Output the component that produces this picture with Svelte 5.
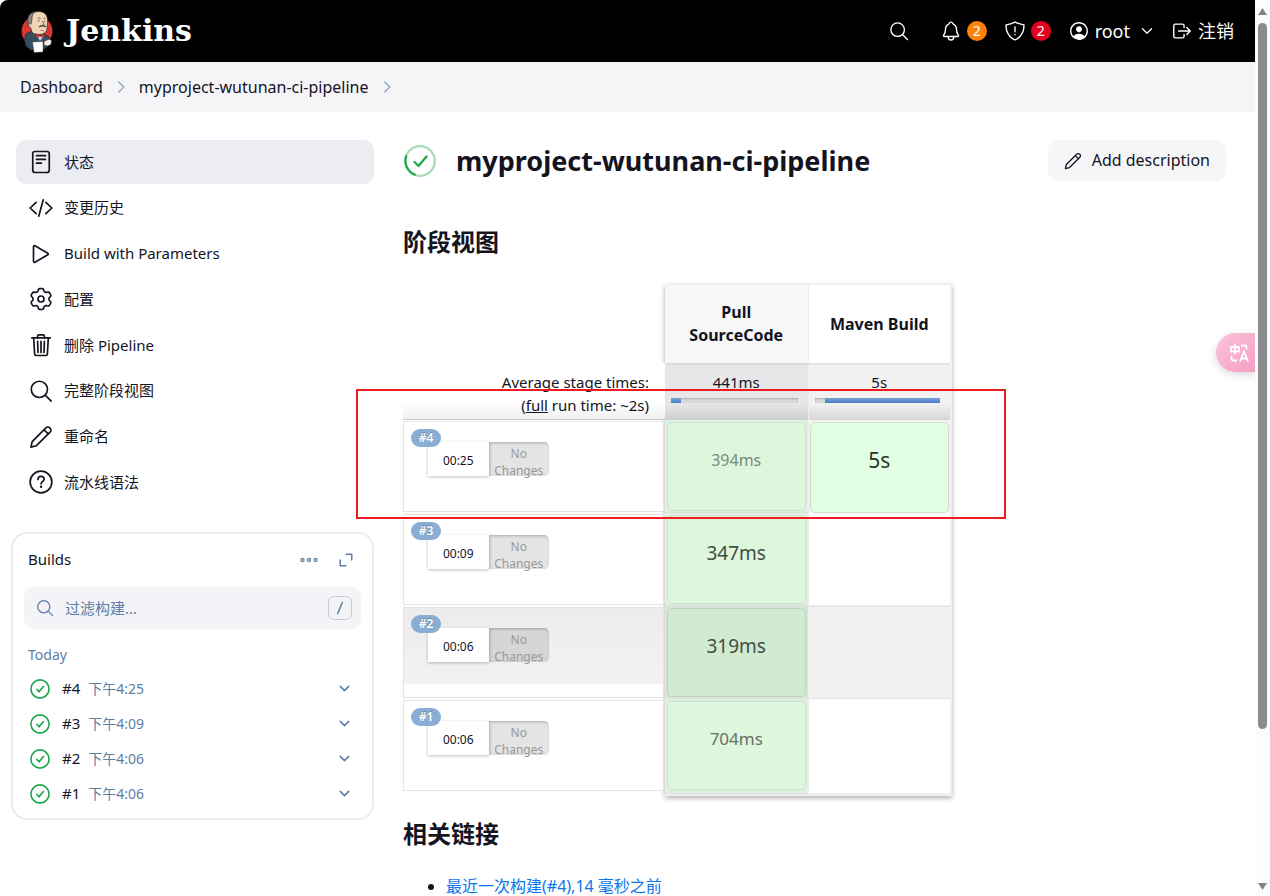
<script>
  const tasks = [
    { icon: 'doc', label: '状态', active: true },
    { icon: 'code', label: '变更历史' },
    { icon: 'play', label: 'Build with Parameters' },
    { icon: 'gear', label: '配置' },
    { icon: 'trash', label: '删除 Pipeline' },
    { icon: 'search', label: '完整阶段视图' },
    { icon: 'pencil', label: '重命名' },
    { icon: 'help', label: '流水线语法' }
  ];

  const builds = [
    { id: '#4', time: '下午4:25' },
    { id: '#3', time: '下午4:09' },
    { id: '#2', time: '下午4:06' },
    { id: '#1', time: '下午4:06' }
  ];

  const runs = [
    { id: '#4', time: '00:25', pull: '394ms', tone: 'faint', maven: '5s' },
    { id: '#3', time: '00:09', pull: '347ms', tone: 'strong' },
    { id: '#2', time: '00:06', pull: '319ms', tone: 'strong', hover: true },
    { id: '#1', time: '00:06', pull: '704ms', tone: 'medium' }
  ];

  // Six soft teeth around a circle, in a 512-unit box.
  const gear =
    'M' +
    Array.from({ length: 144 }, (_, i) => {
      const t = (i / 144) * Math.PI * 2;
      const r = 197 + 27 * Math.tanh(2.2 * Math.cos(6 * t) + 0.5);
      return `${(256 + r * Math.sin(t)).toFixed(1)} ${(256 - r * Math.cos(t)).toFixed(1)}`;
    }).join('L') +
    'Z';

  const shapes = {
    doc: ['M128 32h256a48 48 0 0148 48v352a48 48 0 01-48 48H128a48 48 0 01-48-48V80a48 48 0 0148-48z', 'M160 120h192M160 200h192M160 280h104'],
    code: ['M152 376L24 256l128-120M360 376l128-120-128-120M304 80l-96 352'],
    play: ['M96 101v310c0 17 17 28 31 20l275-158c12-7 12-27 0-34L127 81c-14-8-31 3-31 20z'],
    gear: [gear, 'M256 192a64 64 0 100 128 64 64 0 000-128z'],
    trash: ['M100 112l20 336c1 18 14 32 32 32h208c18 0 31-14 32-32l20-336', 'M60 104h392', 'M184 104V64a26 26 0 0126-26h92a26 26 0 0126 26v40M256 176v240M184 176l8 240M328 176l-8 240'],
    search: ['M221 48a173 173 0 10173 173A173 173 0 00221 48z', 'M346 346L472 472'],
    pencil: ['M40 472l28-116L360 62a54 54 0 0178-4l14 14a54 54 0 01-2 78L158 442z', 'M322 102l88 88'],
    help: ['M256 24a232 232 0 100 464 232 232 0 000-464z', 'M192 200c0-40 30-64 66-64s66 24 66 60c0 46-66 50-66 98'],
    bell: ['M427.68 351.43C402 320 383.87 304 383.87 217.35 383.87 138 343.35 109.73 310 96c-4.43-1.82-8.6-6-9.95-10.55C294.2 65.54 277.8 48 256 48s-38.21 17.55-44 37.47c-1.35 4.6-5.52 8.71-9.95 10.53-33.39 13.75-73.87 41.92-73.87 121.35C128.13 304 110 320 84.32 351.43 73.68 364.45 83 384 101.61 384h308.88c18.51 0 27.77-19.61 17.19-32.57z', 'M320 384v16a64 64 0 01-128 0v-16'],
    shield: ['M463.1 112.37C373.68 96.33 336.71 84.45 256 48c-80.71 36.45-117.68 48.33-207.1 64.37C32.7 369.13 240.58 457.79 256 464c15.42-6.21 223.3-94.87 207.1-351.63z', 'M256 160v116M256 336v8'],
    logout: ['M304 336v40a40 40 0 01-40 40H104a40 40 0 01-40-40V136a40 40 0 0140-40h152c22.09 0 48 17.91 48 40v40M368 336l80-80-80-80M176 256h256'],
    down: ['M112 184l144 144 144-144'],
    right: ['M184 96l160 160-160 160'],
    expand: ['M256 72h184v184', 'M72 256v184h184'],
    check: ['M256 24a232 232 0 100 464 232 232 0 000-464z', 'M176 268l56 60 112-136']
  };
</script>

{#snippet icon(name, size, weight = 36)}
  <svg class="icon" width={size} height={size} viewBox="0 0 512 512" fill="none" stroke="currentColor" stroke-width={weight} stroke-linecap="round" stroke-linejoin="round" aria-hidden="true">
    {#each shapes[name] as d}<path {d} />{/each}
    {#if name === 'help'}<circle cx="257" cy="358" r="26" fill="currentColor" stroke="none" />{/if}
  </svg>
{/snippet}

<div class="window">
  <div class="page">
    <header>
      <a class="brand" href="#home">
        <svg width="34" height="46" viewBox="0 0 34 46" aria-hidden="true">
          <ellipse cx="17" cy="23" rx="15.500" ry="15" fill="#d33833" />
          <path d="M6 26l6-3 4 4 8-1 5 3 1 6-2 3-5 4H11l-5-4-1.500-6z" fill="#335061" stroke="#1c2c36" stroke-width=".8" />
          <path d="M12 24l-1.500-5C8 13 9 4 18 3.500c7 0 10 4 9.500 10.500L27 21c-1 4-4 5.500-8 5.500-4 0-6-1-7-2.500z" fill="#f0d6b7" stroke="#2b2320" stroke-width=".6" />
          <path d="M9.500 19C5.500 12 8 4.500 15.500 3.500c-3 2-3.500 4.500-3.500 7.500l-.5 4z" fill="#8a8688" stroke="#2b2320" stroke-width=".6" />
          <path d="M10.500 15.500c-2.500-.5-2.500 3.500.5 4.500" fill="#f0d6b7" stroke="#2b2320" stroke-width=".5" />
          <path d="M17.500 10.500q1.500-1.500 3 0M23.500 10.500q1-1 2 0M17.500 13h2.500M23.500 13h2M22.500 13l1.500 3.500-1.500.5" fill="none" stroke="#4a3b33" stroke-width=".7" />
          <path d="M19 19q3.500-2.500 7 0" fill="none" stroke="#4f4541" stroke-width="1.300" />
          <path d="M20.500 22.200q2 .8 3.500 0" fill="none" stroke="#7c4a3a" stroke-width=".7" />
          <path d="M17 28l3 5 4-5z" fill="#b9cfdd" />
          <path d="M15.500 25.500l4.500 2 4.500-2v4.500l-4.500-2-4.500 2z" fill="#d33833" stroke="#7a1514" stroke-width=".4" />
          <path d="M12.500 34l10.500-.5v10.500l-9 .5z" fill="#fff" stroke="#35302f" stroke-width=".4" />
          <path d="M24 33.500l5-2.500 2.500 1.500-.5 4-3.500 1.500-3.500-1z" fill="#f5f0ea" stroke="#35302f" stroke-width=".6" />
        </svg>
        <span>Jenkins</span>
      </a>
      <nav class="tools" aria-label="User">
        <button class="plain" aria-label="Search">{@render icon('search', 20, 34)}</button>
        <button class="plain alerts" aria-label="Notifications">{@render icon('bell', 22, 32)}<b class="count orange">2</b></button>
        <button class="plain shields" aria-label="Security warnings">{@render icon('shield', 22, 32)}<b class="count red">2</b></button>
        <a class="user" href="#root">
          <svg class="icon" width="22" height="22" viewBox="0 0 512 512" fill="currentColor" aria-hidden="true">
            <path d="M258.900 48C141.920 46.420 46.420 141.920 48 258.900c1.560 112.190 92.910 203.540 205.100 205.100 117 1.600 212.480-93.900 210.880-210.880C462.440 140.910 371.090 49.560 258.900 48zm126.420 327.250a4 4 0 01-6.140-.320 124.270 124.270 0 00-32.350-29.590C321.370 329 289.110 320 256 320s-65.370 9-90.830 25.340a124.240 124.240 0 00-32.350 29.580 4 4 0 01-6.140.320A175.320 175.320 0 0180 259c-1.630-97.310 78.220-178.760 175.570-179S432 158.810 432 256a175.320 175.320 0 01-46.680 119.250z" />
            <path d="M256 144c-19.720 0-37.550 7.390-50.220 20.820s-19 32-17.570 51.930C191.110 256 221.520 288 256 288s64.830-32 67.790-71.240c1.480-19.740-4.800-38.140-17.680-51.820C293.390 151.440 275.590 144 256 144z" />
          </svg>
          <span>root</span>
          {@render icon('down', 16, 40)}
        </a>
        <a class="logout" href="#logout">{@render icon('logout', 22, 32)}<span>注销</span></a>
      </nav>
    </header>

    <nav class="crumbs" aria-label="Breadcrumb">
      <a href="#dashboard">Dashboard</a>
      {@render icon('right', 16, 52)}
      <a href="#project">myproject-wutunan-ci-pipeline</a>
      {@render icon('right', 16, 52)}
    </nav>

    <div class="body">
      <aside>
        <nav class="tasks" aria-label="Tasks">
          {#each tasks as t}
            <a href="#task" class:active={t.active}>{@render icon(t.icon, 24)}<span>{t.label}</span></a>
          {/each}
        </nav>

        <section class="builds">
          <div class="builds-head">
            <h2>Builds</h2>
            <button class="plain" aria-label="More actions">
              <svg class="icon" width="18" height="18" viewBox="0 0 18 18" fill="none" stroke="currentColor" stroke-width="1.300" aria-hidden="true">
                <circle cx="2.500" cy="9" r="1.500" /><circle cx="9" cy="9" r="1.500" /><circle cx="15.500" cy="9" r="1.500" />
              </svg>
            </button>
            <button class="plain" aria-label="Expand">{@render icon('expand', 16, 48)}</button>
          </div>
          <label class="filter">
            {@render icon('search', 18, 36)}
            <input type="search" placeholder="过滤构建..." aria-label="过滤构建" />
            <kbd>
              <svg width="8" height="14" viewBox="0 0 8 14" fill="none" stroke="currentColor" stroke-width="1.500" aria-hidden="true"><path d="M6.500 1L1.500 13" /></svg>
            </kbd>
          </label>
          <h3>Today</h3>
          <ul>
            {#each builds as b}
              <li>
                <span class="ok">{@render icon('check', 20, 42)}</span>
                <a class="num" href="#build">{b.id}</a>
                <a class="when" href="#build">{b.time}</a>
                <button class="plain" aria-label="Menu for build {b.id}">{@render icon('down', 15, 52)}</button>
              </li>
            {/each}
          </ul>
        </section>
      </aside>

      <main>
        <div class="title">
          <svg class="icon" width="34" height="34" viewBox="0 0 34 34" fill="none" stroke="#1ea64b" stroke-width="2.200" stroke-linecap="round" stroke-linejoin="round" aria-hidden="true">
            <circle cx="17" cy="17" r="14.800" opacity=".4" />
            <path d="M12.500 30.900A14.800 14.800 0 013.500 11.500" stroke-linecap="butt" />
            <path d="M11.500 18l4 4L23.500 12.500" />
          </svg>
          <h1>myproject-wutunan-ci-pipeline</h1>
          <button class="describe">{@render icon('pencil', 18)}Add description</button>
        </div>

        <h2 class="section">阶段视图</h2>

        <div class="stages">
          <table>
            <colgroup><col class="c-run" /><col class="c-stage" /><col class="c-stage" /></colgroup>
            <thead>
              <tr class="names">
                <td></td>
                <th scope="col" class="odd">Pull SourceCode</th>
                <th scope="col">Maven Build</th>
              </tr>
              <tr class="totals">
                <td class="average">
                  <div>Average stage times:</div>
                  <div>(<u>full</u> run time: ~2s)</div>
                </td>
                <td class="odd total">
                  <div>441ms</div>
                  <div class="bar"><i style="width: 8%"></i></div>
                </td>
                <td class="total">
                  <div>5s</div>
                  <div class="bar end"><i style="width: 92%"></i></div>
                </td>
              </tr>
            </thead>
            <tbody>
              {#each runs as r}
                <tr class:hover={r.hover}>
                  <td class="run">
                    <div class="run-box">
                      <span class="badge">{r.id}</span>
                      <div class="meta">
                        <span class="clock">{r.time}</span>
                        <span class="changes">No Changes</span>
                      </div>
                    </div>
                  </td>
                  <td class="stage green"><div class="result {r.tone}">{r.pull}</div></td>
                  <td class="stage" class:done={r.maven}>{#if r.maven}<div class="result bright">{r.maven}</div>{/if}</td>
                </tr>
              {/each}
            </tbody>
          </table>
          <div class="marker"></div>
        </div>

        <h2 class="section links">相关链接</h2>
        <ul class="related">
          <li><a href="#last">最近一次构建(#4),14 毫秒之前</a></li>
        </ul>
      </main>
    </div>

    <button class="translate" aria-label="Translate">
      <svg width="20" height="20" viewBox="0 0 20 20" fill="none" stroke="#fff" stroke-width="1.800" aria-hidden="true">
        <path d="M2 4h8v4.500H2zM6 1v10.500" />
        <path d="M12 2.500h3.500a2 2 0 012 2V6.500M2.500 13v2.500a2 2 0 002 2H8" />
        <path d="M11 18.500l4-10 4 10M12.500 15.500h5" />
      </svg>
    </button>
  </div>

  <div class="scroll" aria-hidden="true">
    <svg width="9" height="7" viewBox="0 0 9 7"><path d="M4.500 0L9 7H0z" fill="#858585" /></svg>
    <div class="thumb"></div>
    <svg class="lower" width="9" height="7" viewBox="0 0 9 7"><path d="M4.500 7L9 0H0z" fill="#858585" /></svg>
  </div>
</div>

<style>
  :global(body) {
    margin: 0;
    background: #fff;
  }
  * {
    box-sizing: border-box;
  }
  .window {
    display: flex;
    height: 100vh;
    overflow: hidden;
    border-radius: 8px;
    background: #fff;
    color: #14141f;
    font: 15px/23px 'Noto Sans', 'Noto Sans CJK SC', sans-serif;
  }
  .page {
    position: relative;
    flex: 1;
    min-width: 0;
    overflow: hidden;
  }
  a {
    color: inherit;
    text-decoration: none;
  }
  h1, h2, h3, ul {
    margin: 0;
    padding: 0;
  }
  .icon {
    display: block;
    flex: none;
  }
  .plain {
    display: flex;
    align-items: center;
    padding: 0;
    border: 0;
    background: none;
    color: inherit;
    font: inherit;
  }

  header {
    display: flex;
    align-items: center;
    justify-content: space-between;
    height: 62px;
    padding: 0 21px 0 20px;
    background: #000;
    color: #fff;
  }
  .brand {
    display: flex;
    align-items: center;
    gap: 12px;
    font: bold 30px/40px 'DejaVu Serif', serif;
  }
  .tools {
    display: flex;
    align-items: center;
    font-size: 18px;
  }
  .alerts {
    margin-left: 31px;
    gap: 5px;
  }
  .shields {
    margin-left: 17px;
    gap: 5px;
  }
  .count {
    width: 20px;
    height: 20px;
    border-radius: 50%;
    font-size: 14px;
    font-weight: 400;
    line-height: 20px;
    text-align: center;
  }
  .orange {
    background: #fe820a;
  }
  .red {
    background: #e6001f;
  }
  .user {
    display: flex;
    align-items: center;
    gap: 5px;
    margin-left: 17px;
  }
  .user span {
    margin-right: 4px;
  }
  .logout {
    display: flex;
    align-items: center;
    gap: 5px;
    margin-left: 16px;
  }

  .crumbs {
    display: flex;
    align-items: center;
    gap: 10px;
    height: 50px;
    padding: 0 20px;
    background: #f5f5f8;
    font-size: 16px;
  }
  .crumbs .icon {
    color: #97aecb;
  }

  .body {
    display: grid;
    grid-template-columns: 374px minmax(0, 1fr);
    padding-top: 28px;
  }
  .tasks {
    display: grid;
    grid-auto-rows: 1fr;
    min-height: 366px;
    padding-left: 16px;
  }
  .tasks a {
    display: flex;
    align-items: center;
    align-self: start;
    gap: 11px;
    height: 44px;
    padding: 0 13px;
    border-radius: 10px;
  }
  .tasks .active {
    background: #ecedf3;
  }

  .builds {
    margin: 26px 0 0 11px;
    padding: 12px 11px 7px;
    border: 2px solid #ebebf3;
    border-radius: 16px;
  }
  .builds-head {
    display: flex;
    align-items: center;
    gap: 20px;
    padding: 1px 7px 0 4px;
    color: #5d7da5;
  }
  .builds h2 {
    flex: 1;
    color: #14141f;
    font-size: 15px;
    font-weight: 400;
    line-height: 25px;
  }
  .filter {
    display: flex;
    align-items: center;
    gap: 11px;
    height: 42px;
    margin-top: 15px;
    padding: 0 9px 0 12px;
    border-radius: 10px;
    background: #f3f3f8;
    color: #5d7da5;
  }
  .filter input {
    flex: 1;
    min-width: 0;
    padding: 0;
    border: 0;
    outline: 0;
    background: none;
    color: inherit;
    font: inherit;
  }
  .filter input::placeholder {
    color: inherit;
    opacity: 1;
  }
  kbd {
    display: flex;
    align-items: center;
    justify-content: center;
    width: 24px;
    height: 24px;
    border: 1px solid #c4cfdd;
    border-radius: 6px;
  }
  h3 {
    margin: 15px 4px 5px;
    color: #5d7da5;
    font-size: 14px;
    font-weight: 400;
    line-height: 22px;
  }
  .builds ul {
    list-style: none;
  }
  .builds li {
    display: flex;
    align-items: center;
    height: 35px;
    padding: 0 9px 0 6px;
    color: #5d7da5;
  }
  .ok {
    color: #1ea64b;
  }
  .num {
    margin: 0 8px 0 12px;
    color: #14141f;
  }
  .when {
    flex: 1;
    font-size: 14px;
  }

  main {
    padding: 0 29px;
  }
  .title {
    display: flex;
    align-items: center;
    height: 41px;
  }
  h1 {
    flex: 1;
    margin-left: 19px;
    font-size: 27px;
    line-height: 38px;
  }
  .describe {
    display: flex;
    align-items: center;
    gap: 10px;
    height: 41px;
    padding: 0 16px;
    border: 0;
    border-radius: 10px;
    background: #f6f6f9;
    color: inherit;
    font: inherit;
    font-size: 16px;
  }
  .section {
    margin-top: 43px;
    font-size: 24px;
    line-height: 36px;
  }

  .stages {
    position: relative;
    width: 549px;
    margin-top: 24px;
  }
  .stages::before {
    content: '';
    position: absolute;
    inset: 0 0 0 262px;
    background: #f0f0f0;
    box-shadow: 0 2px 5px rgba(0, 0, 0, 0.32);
  }
  table {
    position: relative;
    width: 547px;
    padding-bottom: 2px;
    border-collapse: separate;
    border-spacing: 0;
    table-layout: fixed;
  }
  .c-run {
    width: 262px;
  }
  td, th {
    padding: 0;
  }
  .names th {
    height: 79px;
    padding: 0 16px;
    border-top: 1px solid #f0f0f0;
    background: #fff;
    font-size: 16px;
  }
  .names th.odd {
    background: #f7f7f7;
  }
  .names th + th,
  .total + .total,
  .stage + .stage {
    border-left: 1px solid #ededed;
  }
  .totals td {
    height: 57px;
    padding-top: 8px;
    vertical-align: top;
    text-align: center;
  }
  .totals .average {
    padding-right: 16px;
    border-bottom: 1px solid #c8c8c8;
    background: linear-gradient(#fff 70%, #f0f0f0);
    text-align: right;
  }
  .totals .total {
    border-top: 2px solid #e2e2e2;
    background: linear-gradient(#f1f1f1 70%, #d6d6d6);
    padding-top: 6px;
  }
  .totals .total.odd {
    border-top-color: #dadada;
    background: linear-gradient(#e7e7e7 70%, #cecece);
  }
  .bar {
    display: flex;
    height: 5px;
    margin: 4px 10px 0 6px;
    background: #d9d9d9;
    box-shadow: inset 0 1px 2px rgba(0, 0, 0, 0.2);
  }
  .bar.end {
    justify-content: flex-end;
  }
  .bar i {
    background: linear-gradient(#7ba0d2, #4a7bd0);
  }

  tbody td {
    height: 93px;
    vertical-align: top;
  }
  tbody tr:last-child td {
    height: 95px;
  }
  .run {
    padding-top: 1px;
  }
  .run-box {
    height: 91px;
    margin-right: 1px;
    padding: 7px 0 0 7px;
    border: 1px solid #e4e4e4;
    background: #fff;
  }
  .hover .run-box {
    background: linear-gradient(#ececec, #f2f2f2 76px, #fff 76px);
  }
  .badge {
    position: relative;
    display: block;
    width: 30px;
    height: 18px;
    border-radius: 9px;
    background: #8aadd3;
    color: #fff;
    font-size: 12px;
    font-weight: 600;
    line-height: 18px;
    text-align: center;
    text-shadow: 0 -1px 0 rgba(0, 0, 0, 0.25);
    z-index: 1;
  }
  .meta {
    display: flex;
    width: 121px;
    height: 34px;
    margin: -5px 0 0 17px;
  }
  .clock,
  .changes {
    flex: 1;
    text-align: center;
  }
  .clock {
    background: #fff;
    box-shadow: 0 1px 3px rgba(0, 0, 0, 0.25);
    font-size: 12px;
    line-height: 38px;
  }
  .changes {
    border-radius: 0 5px 5px 0;
    background: #e4e4e4;
    box-shadow: inset 1px 1px 3px rgba(0, 0, 0, 0.25);
    color: #999;
    font-size: 12px;
    line-height: 17px;
    padding-top: 3px;
  }
  .hover .changes {
    background: #d6d6d6;
  }
  .stage {
    padding: 2px 1px 1px;
    background: #fff;
    border-bottom: 1px solid #f0f0f0;
  }
  .stage.done {
    padding-bottom: 0;
    border-bottom: 0;
    background: #f3f3f3;
  }
  .green {
    padding: 2px 2px 1px;
    background: #dcf2dc;
    border-bottom-color: #dedede;
  }
  .result {
    height: 89px;
    border: 1px solid #d3dcd3;
    border-radius: 5px;
    background: #ddf7dd;
    line-height: 74px;
    text-align: center;
  }
  .faint {
    color: #7b897b;
    font-size: 16px;
  }
  .medium {
    color: #657265;
    font-size: 17px;
  }
  .strong {
    color: #424d44;
    font-size: 19px;
  }
  .bright {
    height: 91px;
    background: #e3ffe3;
    color: #2b342d;
    font-size: 21px;
  }
  .hover .stage {
    background: #f1f1f1;
    border-bottom-color: #e2e2e2;
    box-shadow: inset 0 1px 0 #e2e2e2;
  }
  .hover .result {
    border-color: #c2d2c2;
    background: #d1ebd1;
  }
  .hover .stage.green {
    background: #d3e5d3;
  }
  .marker {
    position: absolute;
    top: 105px;
    right: -54px;
    left: -47px;
    height: 130px;
    border: 2px solid #ec1c24;
    pointer-events: none;
  }
  .links {
    margin-top: 20px;
  }
  .related {
    margin-top: 23px;
    padding-left: 43px;
    font-size: 16px;
  }
  .related a {
    color: #0b76ee;
  }

  .translate {
    position: absolute;
    top: 333px;
    right: 0;
    display: flex;
    align-items: center;
    width: 39px;
    height: 39px;
    padding: 0 0 0 13px;
    border: 0;
    border-radius: 20px 0 0 20px;
    background: linear-gradient(135deg, #fdc3dc, #f3a0c3);
    box-shadow: 0 3px 8px rgba(0, 0, 0, 0.15);
  }
  .scroll {
    display: flex;
    flex-direction: column;
    align-items: center;
    width: 15px;
    padding: 8px 0 6px;
    background: #fcfcfc;
  }
  .thumb {
    flex: 0 0 80%;
    width: 9px;
    margin-top: 8px;
    border-radius: 5px;
    background: #8b8b8b;
  }
  .lower {
    margin-top: auto;
  }
</style>
